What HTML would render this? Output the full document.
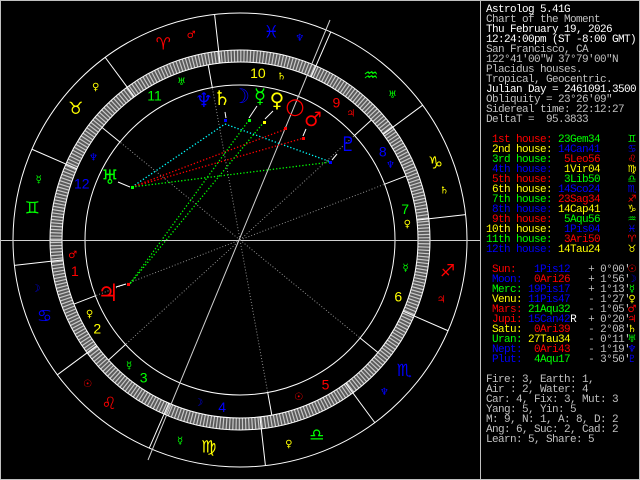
<!DOCTYPE html>
<html><head><meta charset="utf-8">
<style>
html,body{margin:0;padding:0;background:#000;}
#w{position:relative;width:640px;height:480px;overflow:hidden;background:#000;}
svg{position:absolute;left:0;top:0;}
.g{font-family:"DejaVu Sans",sans-serif;}
.n{font-family:"Liberation Sans",sans-serif;}
#p{position:absolute;left:486px;top:5px;font-family:"Liberation Mono",monospace;font-size:11px;letter-spacing:-0.6px;line-height:10px;white-space:pre;color:#c0c0c0;}
#p div{height:10px;}
.w{color:#fff}.r{color:#ff0000}.y{color:#ffff00}.gr{color:#00ff00}.b{color:#0000ff}
#gl{position:absolute;left:626px;top:5px;font-family:"DejaVu Sans",sans-serif;font-size:10px;line-height:10px;width:12px;text-align:center;}
#gl div{height:10px;}
</style></head><body><div id="w">
<svg width="640" height="480" viewBox="0 0 640 480">
<rect x="0.5" y="0.5" width="639" height="479" fill="none" stroke="#c0c0c0"/>
<line x1="480.5" y1="0" x2="480.5" y2="480" stroke="#c0c0c0"/>
<circle cx="240" cy="240" r="184" fill="none" stroke="#5a5a5a" stroke-width="12"/>
<circle cx="240" cy="240" r="184" fill="none" stroke="#c8c8c8" stroke-width="12" stroke-dasharray="1.2 2.011"/>
<g fill="none" stroke="#fff" stroke-width="1">
<circle cx="240" cy="240" r="227"/>
<circle cx="240" cy="240" r="190"/>
<circle cx="240" cy="240" r="178"/>
<circle cx="240" cy="240" r="155"/>
</g>
<g stroke="#fff" stroke-width="1">
<line x1="178" x2="227" transform="translate(240 240) rotate(-96.43)"/>
<line x1="178" x2="227" transform="translate(240 240) rotate(-126.43)"/>
<line x1="178" x2="227" transform="translate(240 240) rotate(-156.43)"/>
<line x1="178" x2="227" transform="translate(240 240) rotate(-186.43)"/>
<line x1="178" x2="227" transform="translate(240 240) rotate(-216.43)"/>
<line x1="178" x2="227" transform="translate(240 240) rotate(-246.43)"/>
<line x1="178" x2="227" transform="translate(240 240) rotate(-276.43)"/>
<line x1="178" x2="227" transform="translate(240 240) rotate(-306.43)"/>
<line x1="178" x2="227" transform="translate(240 240) rotate(-336.43)"/>
<line x1="178" x2="227" transform="translate(240 240) rotate(-6.43)"/>
<line x1="178" x2="227" transform="translate(240 240) rotate(-36.43)"/>
<line x1="178" x2="227" transform="translate(240 240) rotate(-66.43)"/>
<line x1="155" x2="178" transform="translate(240 240) rotate(-201.1)"/>
<line x1="155" x2="178" transform="translate(240 240) rotate(-222.4)"/>
<line x1="155" x2="178" transform="translate(240 240) rotate(-280.3)"/>
<line x1="155" x2="178" transform="translate(240 240) rotate(-320.8)"/>
<line x1="155" x2="178" transform="translate(240 240) rotate(-21.1)"/>
<line x1="155" x2="178" transform="translate(240 240) rotate(-42.4)"/>
<line x1="155" x2="178" transform="translate(240 240) rotate(-100.3)"/>
<line x1="155" x2="178" transform="translate(240 240) rotate(-140.8)"/>
</g>
<line x1="1" y1="240.5" x2="480" y2="240.5" stroke="#d0d0d0"/>
<line x1="330" y1="20" x2="148" y2="460" stroke="#d0d0d0"/>
<g stroke="#909090" stroke-width="1" stroke-dasharray="1 2">
<line x1="0" x2="155" transform="translate(240 240) rotate(-201.1)"/>
<line x1="0" x2="155" transform="translate(240 240) rotate(-222.4)"/>
<line x1="0" x2="155" transform="translate(240 240) rotate(-280.3)"/>
<line x1="0" x2="155" transform="translate(240 240) rotate(-320.8)"/>
<line x1="0" x2="155" transform="translate(240 240) rotate(-21.1)"/>
<line x1="0" x2="155" transform="translate(240 240) rotate(-42.4)"/>
<line x1="0" x2="155" transform="translate(240 240) rotate(-100.3)"/>
<line x1="0" x2="155" transform="translate(240 240) rotate(-140.8)"/>
</g>
<g stroke-width="1.3" stroke-dasharray="1.3 2" fill="none">
<line x1="132" y1="187" x2="225" y2="124" stroke="#00ffff"/>
<line x1="225" y1="124" x2="331" y2="162" stroke="#00ffff"/>
<line x1="132" y1="187" x2="286" y2="129" stroke="#ff0000"/>
<line x1="132" y1="187" x2="304" y2="138" stroke="#ff0000"/>
<line x1="132" y1="187" x2="331" y2="162" stroke="#00ff00"/>
<line x1="249" y1="120" x2="129" y2="285" stroke="#00ff00"/>
<line x1="264" y1="122" x2="129" y2="285" stroke="#00ff00"/>
</g>
<g>
<rect x="224" y="119" width="3" height="3" fill="#0000ff"/>
<rect x="248" y="119" width="3" height="3" fill="#00ff00"/>
<rect x="263" y="121" width="3" height="3" fill="#ffff00"/>
<rect x="284" y="127" width="3" height="3" fill="#ff0000"/>
<rect x="302" y="137" width="3" height="3" fill="#ff0000"/>
<rect x="329" y="161" width="3" height="3" fill="#0000ff"/>
<rect x="127" y="283" width="3" height="3" fill="#ff0000"/>
<rect x="131" y="186" width="3" height="3" fill="#00ff00"/>
</g>
<g stroke="#fff" stroke-width="1">
<line x1="257" y1="106" x2="249" y2="118"/>
<line x1="273" y1="111" x2="265" y2="119"/>
<line x1="306" y1="129" x2="303" y2="136"/>
<line x1="337" y1="154" x2="332" y2="160"/>
<line x1="118" y1="182" x2="130" y2="187"/>
<line x1="116" y1="287" x2="126" y2="284"/>
<line x1="225" y1="112" x2="226" y2="118"/>
</g>
<g class="g" font-size="17" text-anchor="middle" dominant-baseline="central">
<g transform="translate(240 240) rotate(-111.43) translate(210 0) rotate(111.43)"><text fill="#ff0000">♈</text></g>
<g transform="translate(240 240) rotate(-141.43) translate(210 0) rotate(141.43)"><text fill="#ffff00">♉</text></g>
<g transform="translate(240 240) rotate(-171.43) translate(210 0) rotate(171.43)"><text fill="#00ff00">♊</text></g>
<g transform="translate(240 240) rotate(-201.43) translate(210 0) rotate(201.43)"><text fill="#0000ff">♋</text></g>
<g transform="translate(240 240) rotate(-231.43) translate(210 0) rotate(231.43)"><text fill="#ff0000">♌</text></g>
<g transform="translate(240 240) rotate(-261.43) translate(210 0) rotate(261.43)"><text fill="#ffff00">♍</text></g>
<g transform="translate(240 240) rotate(-291.43) translate(210 0) rotate(291.43)"><text fill="#00ff00">♎</text></g>
<g transform="translate(240 240) rotate(-321.43) translate(210 0) rotate(321.43)"><text fill="#0000ff">♏</text></g>
<g transform="translate(240 240) rotate(-351.43) translate(210 0) rotate(351.43)"><text fill="#ff0000">♐</text></g>
<g transform="translate(240 240) rotate(-21.43) translate(210 0) rotate(21.43)"><text fill="#ffff00">♑</text></g>
<g transform="translate(240 240) rotate(-51.43) translate(210 0) rotate(51.43)"><text fill="#00ff00">♒</text></g>
<g transform="translate(240 240) rotate(-81.43) translate(210 0) rotate(81.43)"><text fill="#0000ff">♓</text></g>
</g>
<g class="g" font-size="10" text-anchor="middle" dominant-baseline="central">
<g transform="translate(240 240) rotate(-103.43) translate(210 0) rotate(103.43)"><text fill="#ff0000">♂</text></g>
<g transform="translate(240 240) rotate(-133.43) translate(210 0) rotate(133.43)"><text fill="#ffff00">♀</text></g>
<g transform="translate(240 240) rotate(-163.43) translate(210 0) rotate(163.43)"><text fill="#00ff00">☿</text></g>
<g transform="translate(240 240) rotate(-193.43) translate(210 0) rotate(193.43)"><text fill="#0000ff">☽</text></g>
<g transform="translate(240 240) rotate(-223.43) translate(210 0) rotate(223.43)"><text fill="#ff0000">☉</text></g>
<g transform="translate(240 240) rotate(-253.43) translate(210 0) rotate(253.43)"><text fill="#00ff00">☿</text></g>
<g transform="translate(240 240) rotate(-283.43) translate(210 0) rotate(283.43)"><text fill="#ffff00">♀</text></g>
<g transform="translate(240 240) rotate(-313.43) translate(210 0) rotate(313.43)"><text fill="#0000ff">♆</text></g>
<g transform="translate(240 240) rotate(-343.43) translate(210 0) rotate(343.43)"><text fill="#ff0000">♃</text></g>
<g transform="translate(240 240) rotate(-13.43) translate(210 0) rotate(13.43)"><text fill="#ffff00">♄</text></g>
<g transform="translate(240 240) rotate(-43.43) translate(210 0) rotate(43.43)"><text fill="#00ff00">♅</text></g>
<g transform="translate(240 240) rotate(-73.43) translate(210 0) rotate(73.43)"><text fill="#0000ff">♆</text></g>
</g>
<g class="n" font-size="14" text-anchor="middle" dominant-baseline="central">
<g transform="translate(240 240) rotate(-190.6) translate(168 0) rotate(190.6)"><text fill="#ff0000">1</text></g>
<g transform="translate(240 240) rotate(-211.8) translate(168 0) rotate(211.8)"><text fill="#ffff00">2</text></g>
<g transform="translate(240 240) rotate(-235) translate(168 0) rotate(235)"><text fill="#00ff00">3</text></g>
<g transform="translate(240 240) rotate(-263.9) translate(168 0) rotate(263.9)"><text fill="#0000ff">4</text></g>
<g transform="translate(240 240) rotate(-300.6) translate(168 0) rotate(300.6)"><text fill="#ff0000">5</text></g>
<g transform="translate(240 240) rotate(-340.4) translate(168 0) rotate(340.4)"><text fill="#ffff00">6</text></g>
<g transform="translate(240 240) rotate(-10.6) translate(168 0) rotate(10.6)"><text fill="#00ff00">7</text></g>
<g transform="translate(240 240) rotate(-31.8) translate(168 0) rotate(31.8)"><text fill="#0000ff">8</text></g>
<g transform="translate(240 240) rotate(-55) translate(168 0) rotate(55)"><text fill="#ff0000">9</text></g>
<g transform="translate(240 240) rotate(-83.9) translate(168 0) rotate(83.9)"><text fill="#ffff00">10</text></g>
<g transform="translate(240 240) rotate(-120.6) translate(168 0) rotate(120.6)"><text fill="#00ff00">11</text></g>
<g transform="translate(240 240) rotate(-160.4) translate(168 0) rotate(160.4)"><text fill="#0000ff">12</text></g>
</g>
<g class="g" font-size="10" text-anchor="middle" dominant-baseline="central">
<g transform="translate(240 240) rotate(-185.3) translate(168 0) rotate(185.3)"><text fill="#ff0000">♂</text></g>
<g transform="translate(240 240) rotate(-206.4) translate(168 0) rotate(206.4)"><text fill="#ffff00">♀</text></g>
<g transform="translate(240 240) rotate(-228.7) translate(168 0) rotate(228.7)"><text fill="#00ff00">☿</text></g>
<g transform="translate(240 240) rotate(-255.7) translate(168 0) rotate(255.7)"><text fill="#0000ff">☽</text></g>
<g transform="translate(240 240) rotate(-290.4) translate(168 0) rotate(290.4)"><text fill="#ff0000">☉</text></g>
<g transform="translate(240 240) rotate(-350.2) translate(168 0) rotate(350.2)"><text fill="#00ff00">☿</text></g>
<g transform="translate(240 240) rotate(-5.3) translate(168 0) rotate(5.3)"><text fill="#ffff00">♀</text></g>
<g transform="translate(240 240) rotate(-26.4) translate(168 0) rotate(26.4)"><text fill="#0000ff">♆</text></g>
<g transform="translate(240 240) rotate(-48.7) translate(168 0) rotate(48.7)"><text fill="#ff0000">♃</text></g>
<g transform="translate(240 240) rotate(-75.7) translate(168 0) rotate(75.7)"><text fill="#ffff00">♄</text></g>
<g transform="translate(240 240) rotate(-110.4) translate(168 0) rotate(110.4)"><text fill="#00ff00">♅</text></g>
<g transform="translate(240 240) rotate(-150.7) translate(168 0) rotate(150.7)"><text fill="#0000ff">♆</text></g>
</g>
<g class="g" font-size="20" text-anchor="middle" dominant-baseline="central">
<text x="204" y="100" fill="#0000ff">♆</text>
<text x="222" y="98" fill="#ffff00">♄</text>
<text x="241" y="96" fill="#0000ff">☽</text>
<text x="260" y="96" fill="#00ff00">☿</text>
<text x="277" y="100" fill="#ffff00">♀</text>
<text x="295" y="107" fill="#ff0000" font-size="22">○</text>
<text x="313" y="119" fill="#ff0000">♂</text>
<text x="348" y="144" fill="#0000ff">♇</text>
<text x="110" y="177" fill="#00ff00">♅</text>
<text x="108" y="293" fill="#ff0000" font-size="24">♃</text>
</g>
</svg>
<div id="p"><div class="w">Astrolog 5.41G</div><div>Chart of the Moment</div><div class="w">Thu February 19, 2026</div><div class="w">12:24:00pm (ST -8:00 GMT)</div><div>San Francisco, CA</div><div>122°41'00"W 37°79'00"N</div><div>Placidus houses.</div><div>Tropical, Geocentric.</div><div class="w">Julian Day = 2461091.3500</div><div>Obliquity = 23°26'09"</div><div>Sidereal time: 22:12:27</div><div>DeltaT =  95.3833</div><div></div><div> <span class="r">1st house:</span> <span class="gr">23Gem34</span></div><div> <span class="y">2nd house:</span> <span class="b">14Can41</span></div><div> <span class="gr">3rd house:</span> <span class="r"> 5Leo56</span></div><div> <span class="b">4th house:</span> <span class="y"> 1Vir04</span></div><div> <span class="r">5th house:</span> <span class="gr"> 3Lib50</span></div><div> <span class="y">6th house:</span> <span class="b">14Sco24</span></div><div> <span class="gr">7th house:</span> <span class="r">23Sag34</span></div><div> <span class="b">8th house:</span> <span class="y">14Cap41</span></div><div> <span class="r">9th house:</span> <span class="gr"> 5Aqu56</span></div><div><span class="y">10th house:</span> <span class="b"> 1Pis04</span></div><div><span class="gr">11th house:</span> <span class="r"> 3Ari50</span></div><div><span class="b">12th house:</span> <span class="y">14Tau24</span></div><div></div><div> <span class="r">Sun:</span>  <span class="b"> 1Pis12</span>   + 0°00'</div><div> <span class="b">Moon:</span> <span class="r"> 0Ari26</span>   + 1°56'</div><div> <span class="gr">Merc:</span> <span class="b">19Pis17</span>   + 1°13'</div><div> <span class="y">Venu:</span> <span class="b">11Pis47</span>   - 1°27'</div><div> <span class="r">Mars:</span> <span class="gr">21Aqu32</span>   - 1°05'</div><div> <span class="r">Jupi:</span> <span class="b">15Can42</span><span class="w">R</span>  + 0°20'</div><div> <span class="y">Satu:</span> <span class="r"> 0Ari39</span>   - 2°08'</div><div> <span class="gr">Uran:</span> <span class="y">27Tau34</span>   - 0°11'</div><div> <span class="b">Nept:</span> <span class="r"> 0Ari43</span>   - 1°19'</div><div> <span class="b">Plut:</span> <span class="gr"> 4Aqu17</span>   - 3°50'</div><div></div><div>Fire: 3, Earth: 1,</div><div>Air : 2, Water: 4</div><div>Car: 4, Fix: 3, Mut: 3</div><div>Yang: 5, Yin: 5</div><div>M: 9, N: 1, A: 8, D: 2</div><div>Ang: 6, Suc: 2, Cad: 2</div><div>Learn: 5, Share: 5</div></div>
<div id="gl"><div></div><div></div><div></div><div></div><div></div><div></div><div></div><div></div><div></div><div></div><div></div><div></div><div></div><div class="gr">♊</div><div class="b">♋</div><div class="r">♌</div><div class="y">♍</div><div class="gr">♎</div><div class="b">♏</div><div class="r">♐</div><div class="y">♑</div><div class="gr">♒</div><div class="b">♓</div><div class="r">♈</div><div class="y">♉</div><div></div><div class="r">☉</div><div class="b">☽</div><div class="gr">☿</div><div class="y">♀</div><div class="r">♂</div><div class="r">♃</div><div class="y">♄</div><div class="gr">♅</div><div class="b">♆</div><div class="b">♇</div></div>
</div></body></html>
